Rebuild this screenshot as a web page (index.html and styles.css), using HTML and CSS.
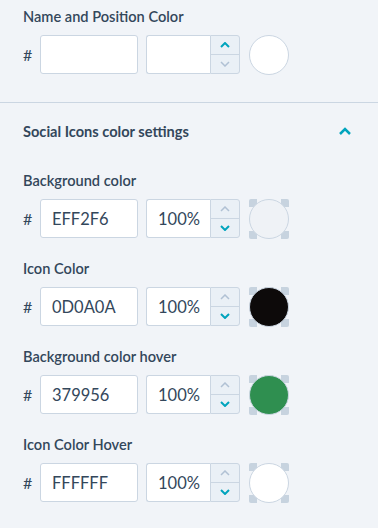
FILE: index.html
```html
<!DOCTYPE html>
<html lang="en">
<head>
    <meta charset="UTF-8">
    <meta name="viewport" content="width=device-width, initial-scale=1.0">
    <title>Color settings</title>
    <link rel="stylesheet" href="styles.css">
</head>
<body>
    <div class="panel">
        <div class="field first">
            <div class="field-label">Name and Position Color</div>
            <div class="color-row">
                <span class="hash">#</span>
                <input class="hex-input" type="text" value="">
                <div class="opacity">
                    <input class="opacity-input" type="text" value="">
                    <div class="spinner">
                        <span class="step active"><svg width="10" height="6" viewBox="0 0 10 6"><path d="M1 5 L5 1 L9 5"/></svg></span>
                        <span class="step"><svg width="10" height="6" viewBox="0 0 10 6"><path d="M1 1 L5 5 L9 1"/></svg></span>
                    </div>
                </div>
                <div class="swatch plain"><span class="dot" style="background:#ffffff"></span></div>
            </div>
        </div>

        <div class="divider"></div>

        <div class="section-head">
            <span class="section-title">Social Icons color settings</span>
            <svg class="collapse" width="14" height="9" viewBox="0 0 14 9"><path d="M2 7 L7 2 L12 7"/></svg>
        </div>

        <div class="field">
            <div class="field-label">Background color</div>
            <div class="color-row">
                <span class="hash">#</span>
                <input class="hex-input" type="text" value="EFF2F6">
                <div class="opacity">
                    <input class="opacity-input" type="text" value="100%">
                    <div class="spinner">
                        <span class="step"><svg width="10" height="6" viewBox="0 0 10 6"><path d="M1 5 L5 1 L9 5"/></svg></span>
                        <span class="step active"><svg width="10" height="6" viewBox="0 0 10 6"><path d="M1 1 L5 5 L9 1"/></svg></span>
                    </div>
                </div>
                <div class="swatch"><span class="dot" style="background:#eff2f6"></span></div>
            </div>
        </div>

        <div class="field">
            <div class="field-label">Icon Color</div>
            <div class="color-row">
                <span class="hash">#</span>
                <input class="hex-input" type="text" value="0D0A0A">
                <div class="opacity">
                    <input class="opacity-input" type="text" value="100%">
                    <div class="spinner">
                        <span class="step"><svg width="10" height="6" viewBox="0 0 10 6"><path d="M1 5 L5 1 L9 5"/></svg></span>
                        <span class="step active"><svg width="10" height="6" viewBox="0 0 10 6"><path d="M1 1 L5 5 L9 1"/></svg></span>
                    </div>
                </div>
                <div class="swatch"><span class="dot" style="background:#0d0a0a"></span></div>
            </div>
        </div>

        <div class="field">
            <div class="field-label">Background color hover</div>
            <div class="color-row">
                <span class="hash">#</span>
                <input class="hex-input" type="text" value="379956">
                <div class="opacity">
                    <input class="opacity-input" type="text" value="100%">
                    <div class="spinner">
                        <span class="step"><svg width="10" height="6" viewBox="0 0 10 6"><path d="M1 5 L5 1 L9 5"/></svg></span>
                        <span class="step active"><svg width="10" height="6" viewBox="0 0 10 6"><path d="M1 1 L5 5 L9 1"/></svg></span>
                    </div>
                </div>
                <div class="swatch"><span class="dot" style="background:#2f8f50"></span></div>
            </div>
        </div>

        <div class="field">
            <div class="field-label">Icon Color Hover</div>
            <div class="color-row">
                <span class="hash">#</span>
                <input class="hex-input" type="text" value="FFFFFF">
                <div class="opacity">
                    <input class="opacity-input" type="text" value="100%">
                    <div class="spinner">
                        <span class="step"><svg width="10" height="6" viewBox="0 0 10 6"><path d="M1 5 L5 1 L9 5"/></svg></span>
                        <span class="step active"><svg width="10" height="6" viewBox="0 0 10 6"><path d="M1 1 L5 5 L9 1"/></svg></span>
                    </div>
                </div>
                <div class="swatch"><span class="dot" style="background:#ffffff"></span></div>
            </div>
        </div>
    </div>
</body>
</html>
```

FILE: styles.css
```css
body {
    margin: 0;
    background-color: #f1f4f8;
    font-family: Lato, "Open Sans", Arial, sans-serif;
    color: #33475b;
}
.panel {
    width: 378px;
    height: 528px;
    overflow: hidden;
}
.field {
    padding: 0 23px;
    margin-top: 31px;
}
.field + .field {
    margin-top: 22px;
}
.field.first {
    margin-top: 0;
    padding-top: 8px;
}
.field-label {
    font-size: 14.6px;
    font-weight: 600;
    line-height: 18px;
    margin-bottom: 9px;
}
.color-row {
    display: flex;
    align-items: center;
    height: 39px;
}
.hash {
    width: 17px;
    font-size: 16px;
}
.hex-input,
.opacity-input {
    box-sizing: border-box;
    height: 39px;
    border: 1px solid #cbd6e2;
    background: #ffffff;
    font-family: inherit;
    font-size: 16.5px;
    color: #33475b;
    outline: none;
}
.hex-input {
    width: 98px;
    padding: 0 11px;
    border-radius: 3px;
}
.opacity {
    display: flex;
    margin-left: 8px;
}
.opacity-input {
    width: 64px;
    padding: 0 0 0 11px;
    border-radius: 3px 0 0 3px;
    border-right: none;
}
.spinner {
    display: flex;
    flex-direction: column;
    width: 30px;
    height: 39px;
    box-sizing: border-box;
    border: 1px solid #cbd6e2;
    border-radius: 0 3px 3px 0;
    background: #eaf0f6;
}
.step {
    flex: 1;
    display: flex;
    align-items: center;
    justify-content: center;
}
.step + .step {
    border-top: 1px solid #cbd6e2;
}
.step path {
    fill: none;
    stroke: #b0c1d4;
    stroke-width: 1.5;
}
.step.active path {
    stroke: #00a4bd;
    stroke-width: 2;
}
.swatch {
    width: 40px;
    height: 40px;
    margin-left: 9px;
    display: flex;
    align-items: center;
    justify-content: center;
    background:
        linear-gradient(#c7d3df, #c7d3df) left top / 8px 8px no-repeat,
        linear-gradient(#c7d3df, #c7d3df) right top / 8px 8px no-repeat,
        linear-gradient(#c7d3df, #c7d3df) left bottom / 8px 8px no-repeat,
        linear-gradient(#c7d3df, #c7d3df) right bottom / 8px 8px no-repeat;
    border-radius: 2px;
}
.swatch.plain {
    background: none;
}
.dot {
    box-sizing: border-box;
    width: 40px;
    height: 40px;
    border-radius: 50%;
    border: 1px solid #cbd6e2;
}
.divider {
    height: 1px;
    background: #cbd6e2;
    margin-top: 28px;
}
.section-head {
    display: flex;
    align-items: center;
    justify-content: space-between;
    padding: 0 26px 0 23px;
    margin-top: 18px;
    height: 20px;
}
.section-title {
    font-size: 14.6px;
    font-weight: 700;
}
.collapse path {
    fill: none;
    stroke: #00a4bd;
    stroke-width: 2.5;
}
```
